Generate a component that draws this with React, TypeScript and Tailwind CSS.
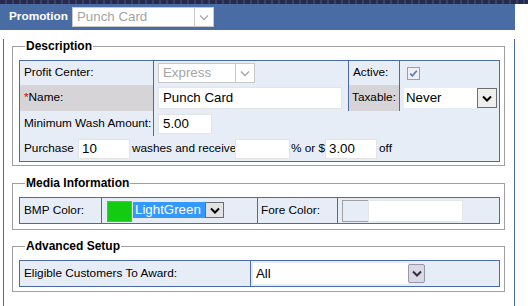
import React from "react";

function Chevron({ color = "#000", width = 2 }: { color?: string; width?: number }) {
  return (
    <svg width="10" height="7" viewBox="0 0 10 7">
      <path d="M1 1.5 L5 5.5 L9 1.5" fill="none" stroke={color} strokeWidth={width} />
    </svg>
  );
}

function DisabledSelect({ value, className }: { value: string; className: string }) {
  return (
    <div className={`flex bg-white border border-[#c8c8c8] ${className}`}>
      <div className="flex-1 flex items-center pl-[4px] text-[13.3px] text-[#a4a4a4] leading-none">{value}</div>
      <div className="w-[19px] flex items-center justify-center border-l border-[#c8c8c8]">
        <Chevron color="#a8a8a8" width={1.4} />
      </div>
    </div>
  );
}

function TextInput({ value, className }: { value: string; className: string }) {
  return (
    <div className={`flex items-center bg-white border border-[#e4e4e4] pl-[3px] text-[13.3px] text-black leading-none ${className}`}>
      {value}
    </div>
  );
}

function Section({ title, className, children }: { title: string; className: string; children: React.ReactNode }) {
  return (
    <fieldset className={`ml-[8px] w-[493px] border border-[#a0a0a0] pl-[6px] pr-[4px] ${className}`}>
      <legend className="ml-[6px] px-[1px] text-[12px] font-bold leading-[15px] text-black">{title}</legend>
      {children}
    </fieldset>
  );
}

export default function App() {
  return (
    <div className="w-[528px] h-[306px] bg-white overflow-hidden text-[11.8px] text-black font-['Liberation_Sans',Arial,sans-serif]">
      <div className="h-[4px] w-full bg-[repeating-linear-gradient(90deg,#262a4c_0px,#262a4c_5px,#3a3f66_5px,#3a3f66_7px)]" />
      <div className="w-[515px]">
        <div className="h-[26px] bg-[#4a6ca5] flex items-center pl-[9px]">
          <span className="w-[63px] text-white font-bold text-[11.8px]">Promotion</span>
          <DisabledSelect value="Punch Card" className="w-[142px] h-[20px]" />
        </div>

        <div className="ml-[3px] w-[512px] h-[273px] border-l border-r border-b border-[#4a6ca5]">
          <Section title="Description" className="mt-[9px] pt-[6px] pb-[3px]">
            <div className="border border-[#4a6aa8] bg-[#e6edf7] flex flex-col">
              <div className="flex h-[24px]">
                <div className="w-[134px] flex items-center pl-[4px] border-r border-[#4a6aa8]">Profit Center:</div>
                <div className="w-[195px] flex items-center pl-[4px] border-r border-[#4a6aa8]">
                  <DisabledSelect value="Express" className="w-[97px] h-[20px]" />
                </div>
                <div className="w-[51px] flex items-center pl-[4px] border-r border-[#4a6aa8]">Active:</div>
                <div className="flex-1 flex items-center pl-[7px]">
                  <svg width="13" height="13" viewBox="0 0 13 13">
                    <rect x="0.5" y="0.5" width="12" height="12" fill="#eef0f4" stroke="#9aa0a8" />
                    <path d="M3.2 6.6 L5.4 8.8 L9.8 3.8" fill="none" stroke="#5b78b0" strokeWidth="1.6" />
                  </svg>
                </div>
              </div>
              <div className="flex h-[26px]">
                <div className="w-[134px] flex items-center pl-[4px] bg-[#d7d4d8] border-r border-[#4a6aa8]">
                  <span className="text-[#e00000]">*</span>Name:
                </div>
                <div className="w-[195px] flex items-center pl-[4px] border-r border-[#4a6aa8]">
                  <TextInput value="Punch Card" className="w-[184px] h-[22px] pl-[4px]" />
                </div>
                <div className="w-[51px] flex items-center pl-[3px] bg-[#d7d4d8] border-r border-[#4a6aa8] whitespace-nowrap">Taxable:</div>
                <div className="flex-1 flex items-center pl-[4px]">
                  <div className="w-[93px] h-[20px] flex bg-white">
                    <div className="flex-1 flex items-center pl-[2px] text-[13.3px] leading-none">Never</div>
                    <div className="w-[20px] flex items-center justify-center border border-[#6e6e6e] bg-[#eeeeee]">
                      <Chevron />
                    </div>
                  </div>
                </div>
              </div>
              <div className="flex h-[25px]">
                <div className="w-[134px] flex items-center pl-[4px] border-r border-[#4a6aa8] whitespace-nowrap">Minimum Wash Amount:</div>
                <div className="flex-1 flex items-center pl-[4px]">
                  <TextInput value="5.00" className="w-[54px] h-[20px] pl-[4px]" />
                </div>
              </div>
              <div className="flex h-[25px] items-center pl-[4px] whitespace-nowrap">
                <span className="w-[54px]">Purchase</span>
                <TextInput value="10" className="w-[52px] h-[20px]" />
                <span className="w-[105px] pl-[2px]">washes and receive</span>
                <TextInput value="" className="w-[55px] h-[20px]" />
                <span className="w-[35px] pl-[1px]">% or $</span>
                <TextInput value="3.00" className="w-[52px] h-[20px]" />
                <span className="ml-[2px]">off</span>
              </div>
            </div>
          </Section>

          <Section title="Media Information" className="mt-[10px] pt-[6px] pb-[5px]">
            <div className="border border-[#4a6aa8] bg-[#e6edf7] flex h-[27px]">
              <div className="w-[82px] flex items-center pl-[4px] border-r border-[#4a6aa8]">BMP Color:</div>
              <div className="w-[156px] flex items-start pt-[3px] pl-[5px] border-r border-[#4a6aa8]">
                <div className="w-[25px] h-[21px] bg-[#11cc11] border border-[#909090]" />
                <div className="ml-[1px] mt-[1px] flex h-[16px]">
                  <div className="w-[72px] flex items-center pl-[2px] bg-[#3399ff] text-white text-[13.3px] leading-none">LightGreen</div>
                  <div className="w-[19px] flex items-center justify-center border border-[#6e6e6e] bg-[#e2e2e2]">
                    <Chevron />
                  </div>
                </div>
              </div>
              <div className="w-[80px] flex items-center pl-[3px] border-r border-[#4a6aa8]">Fore Color:</div>
              <div className="flex-1 flex items-center pl-[4px]">
                <div className="w-[26px] h-[22px] border border-r-0 border-[#a0a0a0]" />
                <div className="w-[95px] h-[22px] bg-white border border-[#e6e6e6]" />
              </div>
            </div>
          </Section>

          <Section title="Advanced Setup" className="mt-[9px] pt-[6px] pb-[4px]">
            <div className="border border-[#4a6aa8] bg-[#e6edf7] flex h-[27px]">
              <div className="w-[231px] flex items-center pl-[4px] border-r border-[#4a6aa8]">Eligible Customers To Award:</div>
              <div className="flex-1 flex items-center pl-[2px]">
                <div className="w-[155px] h-[21px] flex items-center pl-[3px] bg-white text-[13.3px] leading-none">All</div>
                <div className="w-[17px] h-[19px] flex items-center justify-center border border-[#9a98a8] rounded-[2px] bg-[#d9d8e4]">
                  <Chevron color="#303040" />
                </div>
              </div>
            </div>
          </Section>
        </div>
      </div>
    </div>
  );
}
